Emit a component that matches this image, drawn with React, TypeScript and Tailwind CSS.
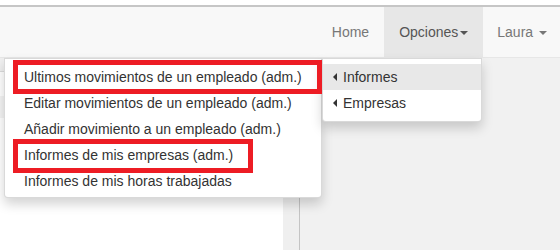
import React from "react";

const subItems = [
  "Ultimos movimientos de un empleado (adm.)",
  "Editar movimientos de un empleado (adm.)",
  "Añadir movimiento a un empleado (adm.)",
  "Informes de mis empresas (adm.)",
  "Informes de mis horas trabajadas",
];

const Caret = () => (
  <span className="inline-block w-0 h-0 ml-[2px] align-middle border-x-4 border-x-transparent border-t-4 border-t-current" />
);

const CaretLeft = () => (
  <span className="inline-block w-0 h-0 border-y-4 border-y-transparent border-r-4 border-r-[#333]" />
);

export default function App() {
  return (
    <div
      className="relative w-[560px] h-[250px] overflow-hidden bg-white text-[14px] leading-[20px]"
      style={{ fontFamily: '"Liberation Sans", Arial, sans-serif' }}
    >
      <div className="h-[7px] bg-white border-b-2 border-[#c6c6c6]" />
      <nav className="h-[51px] bg-[#f8f8f8] border-b border-[#e7e7e7] flex justify-end whitespace-nowrap">
        <a className="px-[15px] py-[15px] text-[#777]">Home</a>
        <a className="px-[15px] py-[15px] bg-[#e7e7e7] text-[#555]">
          Opciones
          <Caret />
        </a>
        <a className="pl-[14px] pr-[13px] py-[15px] text-[#777]">
          Laura <Caret />
        </a>
      </nav>

      <div className="flex h-[192px]">
        <div className="w-[283px] bg-white">
          <div className="h-[14px] bg-[#f0f0f0] border-b border-[#dcdcdc]" />
          <div className="h-[24px]" />
          <div className="h-[22px] bg-[#f4f4f4]" />
        </div>
        <div className="w-[17px] bg-[#efefef] border-r border-[#c4c4c4]" />
        <div className="flex-1 bg-[#f1f1f1]" />
      </div>

      {/* submenu Informes */}
      <ul className="absolute left-[4px] top-[58px] w-[318px] pt-[5px] pb-[3px] bg-white border border-[rgba(0,0,0,0.15)] rounded-b-[4px] shadow-[0_6px_12px_rgba(0,0,0,0.175)] text-[#333]">
        {subItems.map((t) => (
          <li key={t} className="px-[19px] py-[3px] whitespace-nowrap">
            {t}
          </li>
        ))}
      </ul>

      {/* Opciones menu */}
      <ul className="absolute left-[322px] top-[58px] w-[160px] py-[5px] bg-white border border-[rgba(0,0,0,0.15)] rounded-b-[4px] shadow-[0_6px_12px_rgba(0,0,0,0.175)] text-[#333]">
        <li className="flex items-center gap-[6px] pl-[10px] py-[3px] bg-[#e8e8e8]">
          <CaretLeft />
          Informes
        </li>
        <li className="flex items-center gap-[6px] pl-[10px] py-[3px]">
          <CaretLeft />
          Empresas
        </li>
      </ul>

      {/* annotations */}
      <div className="absolute left-[13px] top-[60px] w-[309px] h-[34px] border-[5px] border-[#ed1c24]" />
      <div className="absolute left-[13px] top-[139px] w-[240px] h-[34px] border-[5px] border-[#ed1c24]" />
    </div>
  );
}
